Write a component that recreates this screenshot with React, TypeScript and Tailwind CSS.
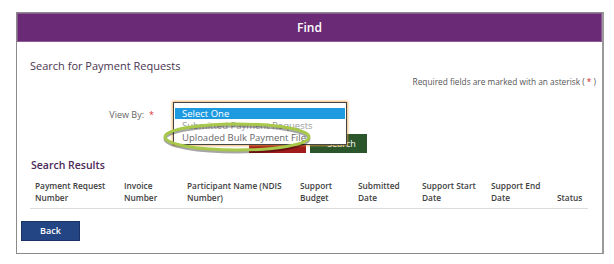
import React from "react";

const cols = [
  ["Payment Request", "Number"],
  ["Invoice", "Number"],
  ["Participant Name (NDIS", "Number)"],
  ["Support", "Budget"],
  ["Submitted", "Date"],
  ["Support Start", "Date"],
  ["Support End", "Date"],
  ["", "Status"],
];

export default function App() {
  return (
    <div className="w-[614px] h-[264px] bg-white pt-[12px] pl-[16px]" style={{ fontFamily: '"Open Sans", "Liberation Sans", sans-serif' }}>
      <div className="relative w-[588px] h-[242px] border border-[#8a8a8a] border-r-2 border-r-[#9a9a9a] bg-white">
        <div className="h-[29px] bg-[#6a2a75] border border-[#8c5a93] text-white text-[12px] font-semibold flex items-center justify-center">
          Find
        </div>
        <div className="mt-[15px] pl-[13px] text-[11px] leading-[18px] text-[#4a3550]">Search for Payment Requests</div>
        <div className="text-right pr-[6px] text-[8.3px] leading-[12px] text-[#555] mt-[1px]">
          Required fields are marked with an asterisk ( <span className="text-[#c22]">*</span> )
        </div>
        <div className="flex items-center mt-[17px] h-[20px]">
          <div className="w-[156px] flex justify-end pr-[19px] text-[9px] text-[#666]">
            View By:<span className="text-[#d33] ml-[5px]">*</span>
          </div>
          <div className="w-[174px] h-[20px]" />
        </div>
        <div className="flex mt-[9px] pl-[232px] gap-[4px]">
          <div className="w-[57px] h-[19px] bg-[#a11b1b]" />
          <div className="w-[57px] h-[19px] bg-[#2b552b] text-white text-[9px] flex items-center justify-center pl-[6px]">Search</div>
        </div>
        <div className="mt-[4px] pl-[14px] text-[10.5px] leading-[16px] font-semibold text-[#4b2a58]">Search Results</div>
        <div className="ml-[13px] mt-[7px] w-[558px] border-b border-[#dcdcdc] pb-[4px] pl-[5px]">
          <div className="grid grid-cols-[89px_63px_113px_58px_64px_69px_66px_1fr] text-[8.3px] leading-[12px] font-semibold text-[#3e3e3e]">
            {cols.map((c, i) => (
              <div key={i}>
                <div>{c[0] || "\u00a0"}</div>
                <div>{c[1]}</div>
              </div>
            ))}
          </div>
        </div>
        <div className="mt-[12px] ml-[4px] w-[59px] h-[20px] bg-[#244583] border border-[#1a3366] text-white text-[9px] font-semibold flex items-center justify-center">
          Back
        </div>

        {/* open dropdown list */}
        <div className="absolute left-[156px] top-[89px] w-[174px] h-[43px] bg-white border border-[#444] shadow-[0_0_2px_1px_rgba(230,160,60,0.7)] pt-[5px] px-[1px] text-[9.5px] leading-[11px]">
          <div className="bg-[#1e9ae0] text-white pl-[7px] h-[11px]">Select One</div>
          <div className="text-[#9a9a9a] pl-[7px] h-[13px] leading-[13px]">Submitted Payment Requests</div>
          <div className="text-[#666] pl-[7px] h-[12px] leading-[12px]">Uploaded Bulk Payment File</div>
        </div>
        {/* highlight ellipse */}
        <svg className="absolute left-[143px] top-[108px]" width="154" height="34" viewBox="0 0 154 34">
          <ellipse cx="77" cy="18" rx="72" ry="13" fill="none" stroke="rgba(0,0,0,0.35)" strokeWidth="3" />
          <ellipse cx="77" cy="16" rx="72" ry="13" fill="none" stroke="#a8c84a" strokeWidth="3" />
        </svg>
      </div>
    </div>
  );
}
